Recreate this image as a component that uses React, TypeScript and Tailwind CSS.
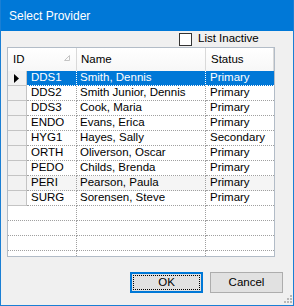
import React from 'react';

const rows = [
  { id: 'DDS1', name: 'Smith, Dennis', status: 'Primary' },
  { id: 'DDS2', name: 'Smith Junior, Dennis', status: 'Primary' },
  { id: 'DDS3', name: 'Cook, Maria', status: 'Primary' },
  { id: 'ENDO', name: 'Evans, Erica', status: 'Primary' },
  { id: 'HYG1', name: 'Hayes, Sally', status: 'Secondary' },
  { id: 'ORTH', name: 'Oliverson, Oscar', status: 'Primary' },
  { id: 'PEDO', name: 'Childs, Brenda', status: 'Primary' },
  { id: 'PERI', name: 'Pearson, Paula', status: 'Primary' },
  { id: 'SURG', name: 'Sorensen, Steve', status: 'Primary' },
];

const SELECTED = 0;
const HOVER = 7;

export default function App() {
  return (
    <div
      className="relative w-[294px] h-[306px] flex flex-col bg-[#f0f0f0] border-x border-b border-[#1a7fd4] text-black select-none"
      style={{ fontFamily: '"Liberation Sans", Arial, sans-serif' }}
    >
      {/* Title bar */}
      <div className="h-[31px] shrink-0 bg-[#0078d7] flex items-center pl-[8px] text-white text-[12px]">
        Select Provider
      </div>

      {/* List inactive */}
      <div className="h-[16px] shrink-0 flex items-center pl-[178px] gap-[6px] text-[11.5px]">
        <span className="w-[13px] h-[13px] bg-white border border-[#333333]" />
        <span>List Inactive</span>
      </div>

      {/* Grid */}
      <div className="ml-[6px] w-[268px] h-[210px] shrink-0 bg-white border border-[#b2bcc7] overflow-hidden text-[11.5px]">
        {/* Header */}
        <div className="h-[23px] flex bg-gradient-to-b from-white to-[#f7f7f7]">
          <div className="relative w-[69px] flex items-center pl-[5px] border-r border-[#d9d9d9]">
            ID
            <svg className="absolute left-[56px] top-[7px]" width="6" height="6" viewBox="0 0 6 6">
              <path d="M5.5 0.5 L5.5 5.5 L0.5 5.5 Z" fill="none" stroke="#c4c4c4" strokeWidth="1" />
            </svg>
          </div>
          <div className="w-[129px] flex items-center pl-[4px] border-r border-[#d9d9d9]">Name</div>
          <div className="flex-1 flex items-center pl-[5px] border-r border-[#d9d9d9]">Status</div>
        </div>

        {/* Rows */}
        {rows.map((r, i) => {
          const sel = i === SELECTED;
          const cellBg = sel ? 'bg-[#0078d7] text-white' : i === HOVER ? 'bg-[#f5f5f5]' : '';
          const line = sel ? 'border-white' : 'border-[#a0a0a0]';
          return (
            <div key={r.id} className="h-[15px] flex">
              <div className="w-[19px] h-[15px] flex items-center pl-[6px] bg-[#f2f2f2] border-r border-b border-[#c4c4c4]">
                {sel && (
                  <svg width="5" height="9" viewBox="0 0 5 9">
                    <path d="M0 0 L5 4.5 L0 9 Z" fill="#000" />
                  </svg>
                )}
              </div>
              <div className={`w-[50px] h-[15px] flex items-center pl-[4px] border-r border-b border-dotted ${line} ${cellBg}`}>
                {r.id}
              </div>
              <div className={`w-[129px] h-[15px] flex items-center pl-[3px] border-r border-b border-dotted whitespace-nowrap ${line} ${cellBg}`}>
                {r.name}
              </div>
              <div className={`flex-1 h-[15px] flex items-center pl-[4px] border-b border-dotted ${line} ${cellBg}`}>
                {r.status}
              </div>
            </div>
          );
        })}

        {/* Empty rows */}
        {[0, 1, 2, 3].map((k) => (
          <div key={k} className="h-[15px] flex">
            <div className="w-[69px] h-[15px] border-r border-b border-dotted border-[#a0a0a0]" />
            <div className="w-[129px] h-[15px] border-r border-b border-dotted border-[#a0a0a0]" />
            <div className="flex-1 h-[15px] border-b border-dotted border-[#a0a0a0]" />
          </div>
        ))}
      </div>

      {/* Buttons */}
      <div className="mt-[15px] flex pl-[129px] gap-[7px] text-[11.5px]">
        <button className="w-[73px] h-[21px] bg-[#e1e1e1] border-2 border-[#0078d7] p-[1px]">
          <span className="w-full h-full flex items-center justify-center border border-dotted border-black">
            OK
          </span>
        </button>
        <button className="w-[73px] h-[21px] bg-[#e1e1e1] border border-[#adadad] flex items-center justify-center">
          Cancel
        </button>
      </div>

      {/* Size grip */}
      <svg className="absolute right-[1px] bottom-[2px]" width="9" height="9" viewBox="0 0 9 9">
        <rect x="7" y="1" width="2" height="2" fill="#b8b8b8" />
        <rect x="4" y="4" width="2" height="2" fill="#b8b8b8" />
        <rect x="7" y="4" width="2" height="2" fill="#b8b8b8" />
        <rect x="1" y="7" width="2" height="2" fill="#b8b8b8" />
        <rect x="4" y="7" width="2" height="2" fill="#b8b8b8" />
        <rect x="7" y="7" width="2" height="2" fill="#b8b8b8" />
      </svg>
    </div>
  );
}
